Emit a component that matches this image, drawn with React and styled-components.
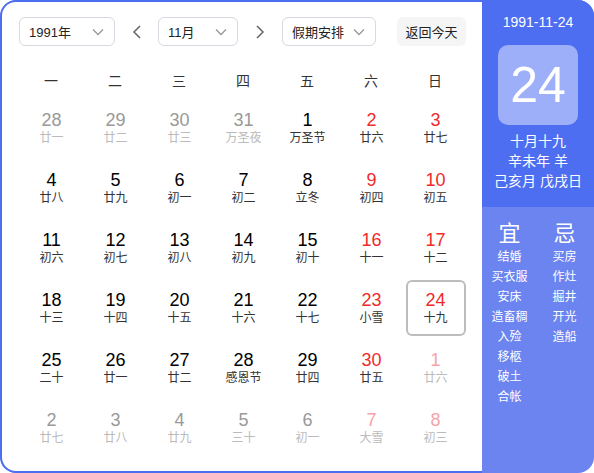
import * as React from "react";
import styled, { createGlobalStyle } from "styled-components";

const GlobalStyle = createGlobalStyle`
  body {
    margin: 0;
    font-family: "Liberation Sans", "Noto Sans CJK SC", sans-serif;
  }
`;

const Wrapper = styled.div`
  display: flex;
  width: 594px;
  height: 473px;
  border-radius: 16px;
  overflow: hidden;
  background: #6b84f0;
`;

const Left = styled.div`
  box-sizing: border-box;
  width: 482px;
  height: 100%;
  background: #fff;
  border: 2px solid #4e6ef2;
  border-right: 0;
  border-radius: 16px 0 0 16px;
  padding: 15px 0 0 17px;
`;

const Toolbar = styled.div`
  display: flex;
  align-items: center;
  height: 29px;
`;

const Select = styled.div`
  box-sizing: border-box;
  display: flex;
  align-items: center;
  justify-content: space-between;
  width: ${(p) => p.width}px;
  height: 29px;
  padding: 0 10px 0 9px;
  border: 1px solid #d7d9e0;
  border-radius: 6px;
  font-size: 13px;
  color: #222;
`;

const ArrowBtn = styled.div`
  display: flex;
  align-items: center;
  justify-content: center;
  width: ${(p) => p.width}px;
  height: 29px;
`;

const TodayBtn = styled.div`
  display: flex;
  align-items: center;
  justify-content: center;
  margin-left: 21px;
  width: 69px;
  height: 29px;
  border-radius: 6px;
  background: #f5f5f6;
  font-size: 13px;
  color: #222;
`;

const Grid = styled.div`
  display: grid;
  grid-template-columns: repeat(7, 64px);
  margin-top: 16px;
`;

const WeekHead = styled.div`
  height: 36px;
  display: flex;
  align-items: center;
  justify-content: center;
  font-size: 14px;
  color: #333;
`;

const Cell = styled.div`
  height: 60px;
  display: flex;
  align-items: center;
  justify-content: center;
`;

const DayBox = styled.div`
  box-sizing: border-box;
  width: 60px;
  height: 56px;
  margin-left: 1px;
  display: flex;
  flex-direction: column;
  align-items: center;
  justify-content: center;
  border-radius: 6px;
  border: 2px solid ${(p) => (p.$selected ? "#bdbdbd" : "transparent")};
`;

const Num = styled.div`
  font-size: 18px;
  line-height: 20px;
  color: ${(p) =>
    p.$other ? (p.$weekend ? "#f5a3a8" : "#999") : p.$weekend ? "#f02a2a" : "#000"};
`;

const Lunar = styled.div`
  font-size: 12px;
  line-height: 16px;
  color: ${(p) => (p.$other ? "#bbb" : "#333")};
`;

const Right = styled.div`
  flex: 1;
  display: flex;
  flex-direction: column;
  color: #fff;
`;

const Top = styled.div`
  display: flex;
  flex-direction: column;
  align-items: center;
  background: #4e6ef2;
  padding: 12px 0 16px;
`;

const DateText = styled.div`
  font-size: 14px;
  line-height: 20px;
`;

const BigDay = styled.div`
  width: 80px;
  height: 80px;
  margin: 13px 0 6px;
  border-radius: 10px;
  background: rgba(255, 255, 255, 0.45);
  display: flex;
  align-items: center;
  justify-content: center;
  font-size: 50px;
`;

const InfoLine = styled.div`
  font-size: 14px;
  line-height: 20px;
`;

const Almanac = styled.div`
  flex: 1;
  display: grid;
  grid-template-columns: 55px 55px;
  align-content: start;
  padding-top: 14px;
`;

const AlmanacCol = styled.div`
  display: flex;
  flex-direction: column;
  align-items: center;
`;

const AlmanacHead = styled.div`
  font-size: 22px;
  line-height: 26px;
`;

const AlmanacItem = styled.div`
  font-size: 12px;
  line-height: 20px;
`;

function Chevron({ dir = "down" }) {
  if (dir === "down") {
    return (
      <svg width="12" height="8" viewBox="0 0 12 8">
        <polyline points="1,1.5 6,6.5 11,1.5" fill="none" stroke="#999" strokeWidth="1.3" />
      </svg>
    );
  }
  const pts = dir === "left" ? "8,1 2,7 8,13" : "2,1 8,7 2,13";
  return (
    <svg width="10" height="14" viewBox="0 0 10 14">
      <polyline points={pts} fill="none" stroke="#666" strokeWidth="1.5" />
    </svg>
  );
}

const weekNames = ["一", "二", "三", "四", "五", "六", "日"];

const days = [
  ["28", "廿一", 1], ["29", "廿二", 1], ["30", "廿三", 1], ["31", "万圣夜", 1], ["1", "万圣节"], ["2", "廿六"], ["3", "廿七"],
  ["4", "廿八"], ["5", "廿九"], ["6", "初一"], ["7", "初二"], ["8", "立冬"], ["9", "初四"], ["10", "初五"],
  ["11", "初六"], ["12", "初七"], ["13", "初八"], ["14", "初九"], ["15", "初十"], ["16", "十一"], ["17", "十二"],
  ["18", "十三"], ["19", "十四"], ["20", "十五"], ["21", "十六"], ["22", "十七"], ["23", "小雪"], ["24", "十九"],
  ["25", "二十"], ["26", "廿一"], ["27", "廿二"], ["28", "感恩节"], ["29", "廿四"], ["30", "廿五"], ["1", "廿六", 1],
  ["2", "廿七", 1], ["3", "廿八", 1], ["4", "廿九", 1], ["5", "三十", 1], ["6", "初一", 1], ["7", "大雪", 1], ["8", "初三", 1],
];

const yi = ["结婚", "买衣服", "安床", "造畜稠", "入殓", "移柩", "破土", "合帐"];
const ji = ["买房", "作灶", "掘井", "开光", "造船"];

export default function App() {
  return (
    <>
      <GlobalStyle />
      <Wrapper>
        <Left>
          <Toolbar>
            <Select width={96}>
              <span>1991年</span>
              <Chevron />
            </Select>
            <ArrowBtn width={43}>
              <Chevron dir="left" />
            </ArrowBtn>
            <Select width={80}>
              <span>11月</span>
              <Chevron />
            </Select>
            <ArrowBtn width={44}>
              <Chevron dir="right" />
            </ArrowBtn>
            <Select width={94}>
              <span>假期安排</span>
              <Chevron />
            </Select>
            <TodayBtn>返回今天</TodayBtn>
          </Toolbar>
          <Grid>
            {weekNames.map((w) => (
              <WeekHead key={w}>{w}</WeekHead>
            ))}
            {days.map(([n, l, other], i) => {
              const weekend = i % 7 >= 5;
              return (
                <Cell key={i}>
                  <DayBox $selected={i === 27}>
                    <Num $other={!!other} $weekend={weekend}>{n}</Num>
                    <Lunar $other={!!other}>{l}</Lunar>
                  </DayBox>
                </Cell>
              );
            })}
          </Grid>
        </Left>
        <Right>
          <Top>
            <DateText>1991-11-24</DateText>
            <BigDay>24</BigDay>
            <InfoLine>十月十九</InfoLine>
            <InfoLine>辛未年 羊</InfoLine>
            <InfoLine>己亥月 戊戌日</InfoLine>
          </Top>
          <Almanac>
            <AlmanacCol>
              <AlmanacHead>宜</AlmanacHead>
              {yi.map((t) => (
                <AlmanacItem key={t}>{t}</AlmanacItem>
              ))}
            </AlmanacCol>
            <AlmanacCol>
              <AlmanacHead>忌</AlmanacHead>
              {ji.map((t) => (
                <AlmanacItem key={t}>{t}</AlmanacItem>
              ))}
            </AlmanacCol>
          </Almanac>
        </Right>
      </Wrapper>
    </>
  );
}
